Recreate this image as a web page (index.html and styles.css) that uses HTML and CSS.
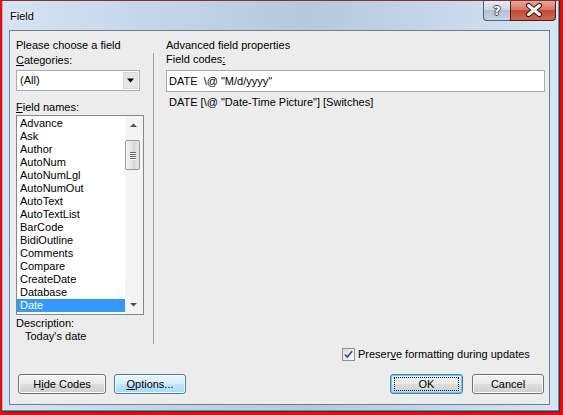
FILE: index.html
```html
<!DOCTYPE html>
<html>
<head>
<meta charset="utf-8">
<link rel="stylesheet" href="styles.css">
</head>
<body>
<div class="win">
  <div class="titlebar">
    <span class="title">Field</span>
    <div class="caps">
      <div class="cap help"><span>?</span></div>
      <div class="cap close">
        <svg width="46" height="20" viewBox="0 0 46 20">
          <path d="M17.5 5.5 L28.5 14.5 M28.5 5.5 L17.5 14.5" stroke="#3a1a14" stroke-width="5.2" stroke-linecap="round" fill="none"/>
          <path d="M17.5 5.5 L28.5 14.5 M28.5 5.5 L17.5 14.5" stroke="#ffffff" stroke-width="3" stroke-linecap="round" fill="none"/>
        </svg>
      </div>
    </div>
  </div>
  <div class="client">
    <div class="main">
      <div class="left">
        <div class="lbl">Please choose a field</div>
        <div class="lbl cat"><u>C</u>ategories:</div>
        <div class="combo">
          <span class="combo-text">(All)</span>
          <span class="dd">
            <svg width="15" height="18" viewBox="0 0 15 18"><path d="M4 6.5 H11 L7.5 10.5 Z" fill="#000"/></svg>
          </span>
        </div>
        <div class="lbl fn"><u>F</u>ield names:</div>
        <div class="list">
          <ul class="items">
            <li>Advance</li>
            <li>Ask</li>
            <li>Author</li>
            <li>AutoNum</li>
            <li>AutoNumLgl</li>
            <li>AutoNumOut</li>
            <li>AutoText</li>
            <li>AutoTextList</li>
            <li>BarCode</li>
            <li>BidiOutline</li>
            <li>Comments</li>
            <li>Compare</li>
            <li>CreateDate</li>
            <li>Database</li>
            <li class="sel">Date</li>
          </ul>
          <div class="sb">
            <svg class="arrow up" width="17" height="17" viewBox="0 0 17 17"><path d="M5 10 H12 L8.5 6.5 Z" fill="#505050"/></svg>
            <div class="thumb"><span></span><span></span><span></span><span></span></div>
            <svg class="arrow down" width="17" height="17" viewBox="0 0 17 17"><path d="M5 7 H12 L8.5 10.5 Z" fill="#505050"/></svg>
          </div>
        </div>
        <div class="lbl desc">Description:</div>
        <div class="lbl desc-text">Today's date</div>
      </div>
      <div class="sep"></div>
      <div class="right">
        <div class="lbl">Advanced field properties</div>
        <div class="lbl fc">Field codes<u>:</u></div>
        <div class="codes">DATE  \@ "M/d/yyyy"</div>
        <div class="syntax">DATE [\@ "Date-Time Picture"] [Switches]</div>
        <div class="check-row">
          <span class="chk">
            <svg width="13" height="13" viewBox="0 0 13 13"><path d="M3 6.5 L5.3 9.2 L10 3.2" stroke="#3e4d99" stroke-width="1.8" fill="none"/></svg>
          </span>
          <span>Preser<u>v</u>e formatting during updates</span>
        </div>
      </div>
    </div>
    <div class="buttons">
      <button class="btn w-hide">H<u>i</u>de Codes</button>
      <button class="btn hot w-opt"><u>O</u>ptions...</button>
      <span class="spacer"></span>
      <button class="btn def w-ok"><span class="focus">OK</span></button>
      <button class="btn w-cancel">Cancel</button>
    </div>
  </div>
</div>
</body>
</html>
```

FILE: styles.css
```css
* { box-sizing: border-box; }
html, body { margin: 0; padding: 0; }
body {
  width: 563px;
  height: 415px;
  overflow: hidden;
  font-family: "Liberation Sans", Arial, sans-serif;
  font-size: 11px;
  line-height: 13px;
  color: #000;
}
.win {
  width: 563px;
  height: 415px;
  border-left: 2px solid #ff0000;
  border-right: 3px solid #ff0000;
  border-bottom: 3px solid #ff0000;
  border-top: 1px solid #7a3434;
  background: linear-gradient(90deg, #d5e4f3 0%, #c4d7ea 25%, #b5c9de 55%, #c6d8ea 80%, #d8e6f3 100%);
  box-shadow: inset -1px -1px 0 #2a3a48, inset -2px -2px 0 #3c9dbd, inset 1px 0 0 #9cbad4;
  display: flex;
  flex-direction: column;
}
.titlebar {
  height: 29px;
  flex: none;
  display: flex;
  align-items: flex-start;
}
.title {
  margin-left: 8px;
  margin-top: 9px;
  color: #000;
  text-shadow: 0 0 6px #ffffff, 0 0 3px #ffffff;
}
.caps {
  margin-left: auto;
  margin-right: 4px;
  display: flex;
  height: 20px;
}
.cap {
  height: 20px;
  border: 1px solid #50606f;
  border-top: none;
}
.help {
  width: 27px;
  border-right: none;
  border-radius: 0 0 0 4px;
  background: linear-gradient(#e4ebf3 0%, #cdd8e4 45%, #b2c2d4 50%, #c8d6e6 100%);
  display: flex;
  align-items: center;
  justify-content: center;
}
.help span {
  font-family: "DejaVu Sans", sans-serif;
  font-weight: bold;
  font-size: 13px;
  color: #fff;
  text-shadow: 1px 0 0 #3c4a58, -1px 0 0 #3c4a58, 0 1px 0 #3c4a58, 0 -1px 0 #3c4a58;
}
.close {
  width: 46px;
  border-color: #4a1c16;
  border-radius: 0 0 4px 0;
  background: linear-gradient(#e7a596 0%, #d97966 45%, #c54a33 50%, #d2694f 100%);
}
.close svg { display: block; margin-top: -1px; }
.client {
  flex: 1;
  margin: 0 10px 7px 7px;
  border: 1px solid #6d7f91;
  background: #ececec;
  display: flex;
  flex-direction: column;
  padding: 8px 4px 10px 6px;
}
.main {
  flex: 1;
  display: flex;
  min-height: 0;
}
.left {
  width: 128px;
  flex: none;
  display: flex;
  flex-direction: column;
}
.lbl { white-space: nowrap; }
.cat { margin-top: 2px; }
.combo {
  margin-top: 3px;
  width: 124px;
  height: 21px;
  border: 1px solid #a5acb5;
  background: #fff;
  display: flex;
  align-items: stretch;
}
.combo-text {
  flex: 1;
  padding: 3px 0 0 3px;
}
.dd {
  width: 15px;
  margin: 1px;
  background: #e6e6e6;
  border: 1px solid #d8d8d8;
}
.dd svg { display: block; margin-left: -1px; margin-top: -1px; }
.fn { margin-top: 10px; }
.list {
  margin-top: 1px;
  width: 128px;
  height: 200px;
  border: 1px solid #828790;
  background: #fff;
  display: flex;
}
.items {
  flex: 1;
  margin: 0;
  padding: 1px 0 0;
  list-style: none;
  overflow: hidden;
}
.items li {
  height: 13px;
  padding-left: 3px;
  white-space: nowrap;
}
.items li.sel {
  background: #3399ff;
  color: #fff;
}
.sb {
  width: 18px;
  flex: none;
  background: #f4f4f4;
  position: relative;
}
.arrow { position: absolute; left: 0; display: block; }
.arrow.up { top: 1px; }
.arrow.down { bottom: 1px; }
.thumb {
  position: absolute;
  left: 0;
  width: 15px;
  top: 24px;
  height: 30px;
  border: 1px solid #9a9a9a;
  border-radius: 2px;
  background: linear-gradient(90deg, #f3f3f3, #e2e2e2 50%, #d4d4d4 55%, #e6e6e6);
  display: flex;
  flex-direction: column;
  align-items: center;
  justify-content: center;
  gap: 1px;
}
.thumb span {
  width: 6px;
  height: 1px;
  background: #6a6a6a;
  box-shadow: 0 1px 0 #fafafa;
}
.desc { margin-top: 2px; }
.desc-text { padding-left: 9px; }
.sep {
  width: 1px;
  flex: none;
  background: #a0a0a0;
  margin: 14px 0 30px 9px;
}
.right {
  flex: 1;
  min-width: 0;
  margin-left: 12px;
  display: flex;
  flex-direction: column;
}
.fc { margin-top: 1px; }
.codes {
  margin-top: 4px;
  height: 22px;
  border: 1px solid #a5acb5;
  background: #fff;
  padding: 4px 2px 0;
  white-space: pre;
}
.syntax {
  margin-top: 4px;
  padding-left: 3px;
  white-space: pre;
}
.check-row {
  margin-top: auto;
  margin-bottom: 13px;
  margin-left: 176px;
  display: flex;
  align-items: center;
  gap: 3px;
  white-space: nowrap;
}
.chk {
  width: 13px;
  height: 13px;
  border: 1px solid #8e8f8f;
  background: linear-gradient(135deg, #dcdcdc, #fbfbfb);
  display: flex;
}
.chk svg { margin: -1px; }
.buttons {
  flex: none;
  height: 20px;
  display: flex;
  padding: 0 1px 0 2px;
}
.spacer { flex: 1; }
.btn {
  height: 20px;
  margin: 0;
  padding: 0;
  font: inherit;
  color: #000;
  border: 1px solid #707070;
  border-radius: 3px;
  background: linear-gradient(#f2f2f2 0%, #ebebeb 48%, #dddddd 52%, #cfcfcf 100%);
  box-shadow: inset 0 0 0 1px #fbfbfb;
  display: flex;
  align-items: center;
  justify-content: center;
}
.btn.hot {
  border-color: #3c7fb1;
  background: linear-gradient(#eaf6fd 0%, #d9f0fc 48%, #bee6fd 52%, #a7d9f5 100%);
}
.btn.def {
  border-color: #3c7fb1;
  box-shadow: inset 0 0 0 1px #48d8fb;
}
.focus {
  display: block;
  border: 1px dotted #000;
  width: calc(100% - 6px);
  height: 14px;
  line-height: 12px;
  text-align: center;
}
.w-hide { width: 88px; }
.w-opt { width: 72px; margin-left: 8px; }
.w-ok { width: 73px; }
.w-cancel { width: 72px; margin-left: 9px; }
```
